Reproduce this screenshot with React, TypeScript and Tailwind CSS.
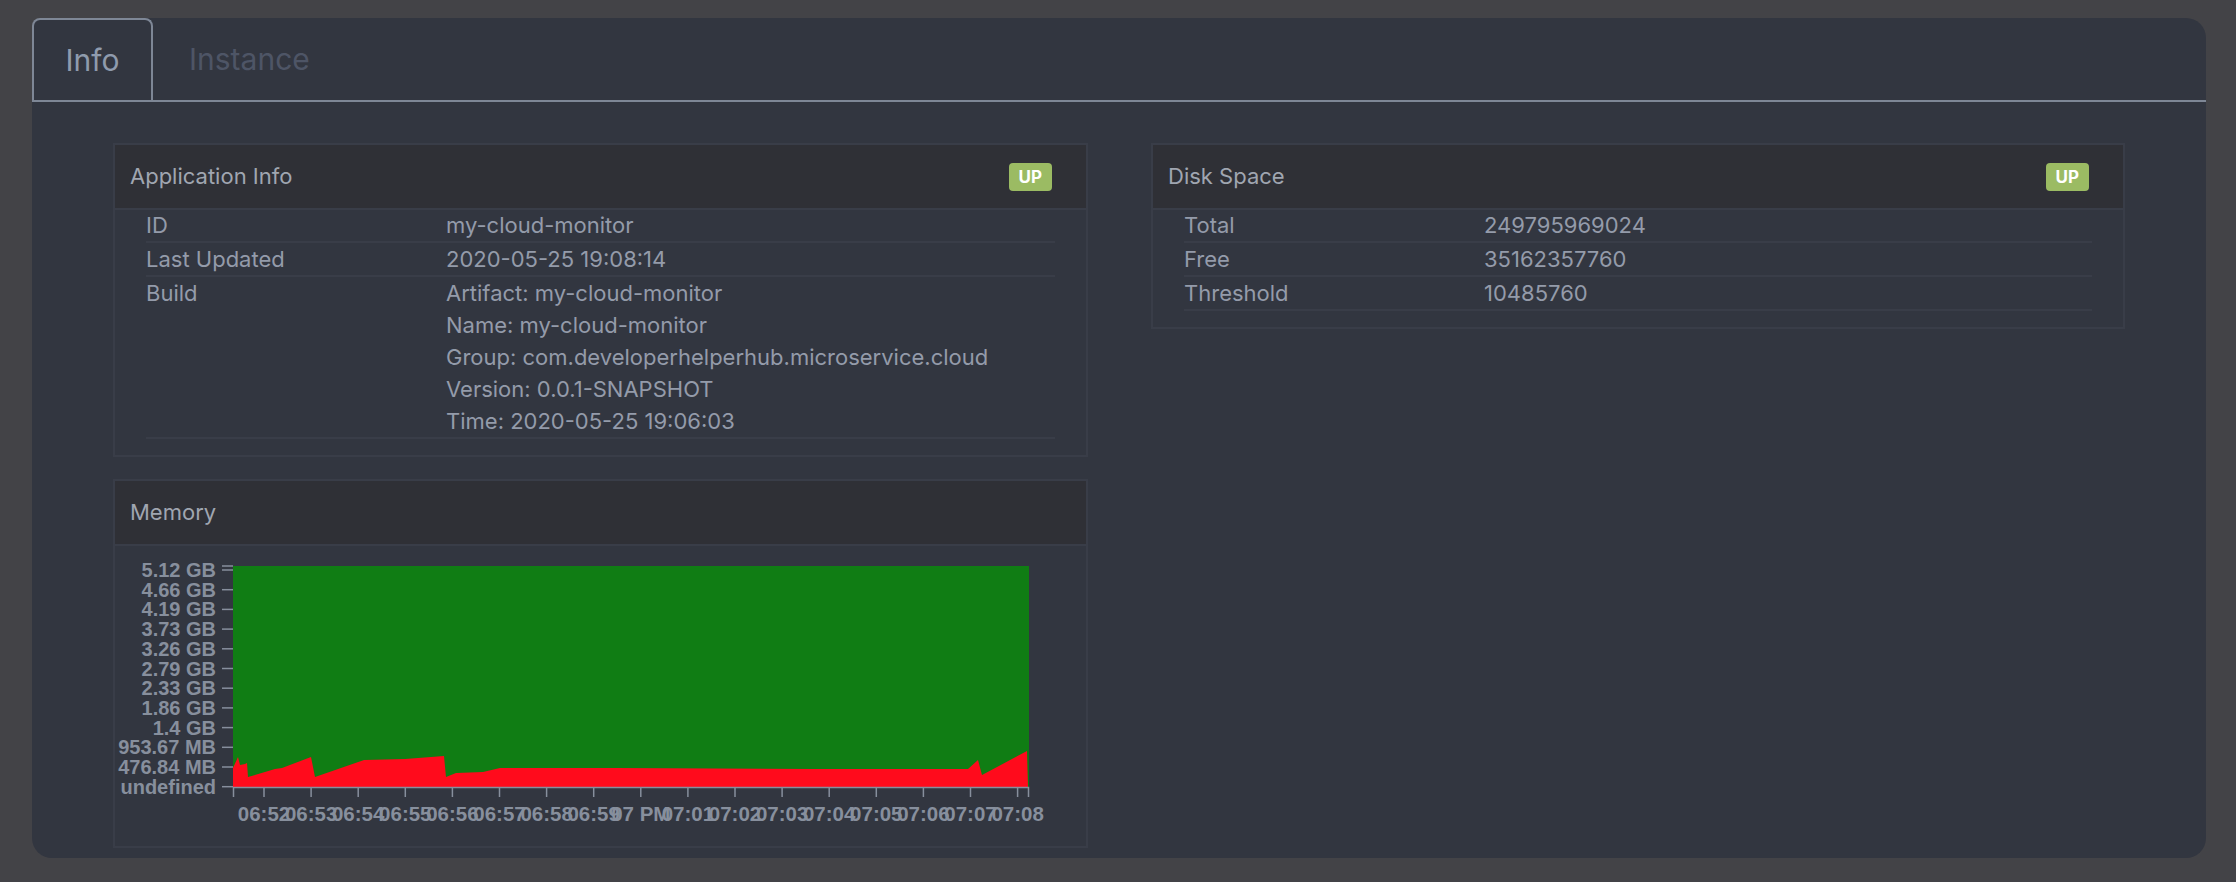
import React from "react";

type Row = { label: string; value: string[] };

const appRows: Row[] = [
  { label: "ID", value: ["my-cloud-monitor"] },
  { label: "Last Updated", value: ["2020-05-25 19:08:14"] },
  {
    label: "Build",
    value: [
      "Artifact: my-cloud-monitor",
      "Name: my-cloud-monitor",
      "Group: com.developerhelperhub.microservice.cloud",
      "Version: 0.0.1-SNAPSHOT",
      "Time: 2020-05-25 19:06:03",
    ],
  },
];

const diskRows: Row[] = [
  { label: "Total", value: ["249795969024"] },
  { label: "Free", value: ["35162357760"] },
  { label: "Threshold", value: ["10485760"] },
];

const yTicks = [
  "5.12 GB",
  "4.66 GB",
  "4.19 GB",
  "3.73 GB",
  "3.26 GB",
  "2.79 GB",
  "2.33 GB",
  "1.86 GB",
  "1.4 GB",
  "953.67 MB",
  "476.84 MB",
  "NaN undefined",
];

const xTicks = [
  "06:52",
  "06:53",
  "06:54",
  "06:55",
  "06:56",
  "06:57",
  "06:58",
  "06:59",
  "07 PM",
  "07:01",
  "07:02",
  "07:03",
  "07:04",
  "07:05",
  "07:06",
  "07:07",
  "07:08",
];

// used memory, in chart pixels
const usedPath =
  "M118,241 L118,222 L123,211 L125,219 L130,218 L132,217 L133,231 L160,223 L167,222 L196,211 L200,231 " +
  "L249,214 L290,213 L329,210 L331,231 L341,227 L368,226 L385,222 L500,222 L700,223 L853,223 " +
  "L863,214 L867,229 L912,205 L913,241 Z";

function Badge() {
  return (
    <span className="rounded-[4px] bg-[#9bbb63] px-[10px] text-[17px] leading-[28px] font-bold text-white">
      UP
    </span>
  );
}

function Panel({ title, badge, children }: { title: string; badge?: boolean; children: React.ReactNode }) {
  return (
    <div className="border-2 border-[#393d48]">
      <div className="flex h-[65px] items-center justify-between border-b-2 border-[#393d48] bg-[#2f3036] pl-[15px] pr-[34px]">
        <span className="text-[22px] text-[#a0a6b1]">{title}</span>
        {badge && <Badge />}
      </div>
      {children}
    </div>
  );
}

function InfoTable({ rows }: { rows: Row[] }) {
  return (
    <div className="mx-[31px] mb-[16px] mt-[-1px]">
      {rows.map((r) => (
        <div key={r.label} className="flex border-b-2 border-[#393d48] text-[22px] leading-[32px] text-[#949baa]">
          <div className="w-[300px] shrink-0">{r.label}</div>
          <div>
            {r.value.map((v) => (
              <div key={v}>{v}</div>
            ))}
          </div>
        </div>
      ))}
    </div>
  );
}

function MemoryChart() {
  const axis = "#878f9d";
  return (
    <svg width={971} height={299} className="block" style={{ fontFamily: "'Liberation Sans', Arial, sans-serif" }}>
      <rect x={118} y={20} width={796} height={221} fill="#107d14" />
      <path d={usedPath} fill="#ff0b1c" />
      {/* y axis */}
      <line x1={107} y1={20} x2={118} y2={20} stroke={axis} strokeWidth={1.5} />
      {yTicks.map((t, i) => {
        const y = 24 + i * 19.7;
        return (
          <g key={t}>
            <line x1={107} y1={y} x2={118} y2={y} stroke={axis} strokeWidth={1.5} />
            <text x={101} y={y + 7} textAnchor="end" fontSize={20} fontWeight={700} fill={axis}>
              {t}
            </text>
          </g>
        );
      })}
      {/* x axis */}
      <path d="M118.5,251 V241.5 H913.5 V251" fill="none" stroke={axis} strokeWidth={1.5} />
      {xTicks.map((t, i) => {
        const x = 149 + i * 47.1;
        return (
          <g key={t}>
            <line x1={x} y1={241} x2={x} y2={251} stroke={axis} strokeWidth={1.5} />
            <text x={x} y={275} textAnchor="middle" fontSize={20.5} fontWeight={700} fill={axis}>
              {t}
            </text>
          </g>
        );
      })}
    </svg>
  );
}

export default function App() {
  return (
    <div className="h-[882px] w-[2236px] bg-[#434347] pl-[32px] pr-[30px] pt-[18px] font-['Inter',sans-serif]">
      <div className="h-[840px] rounded-[20px] bg-[#323640]">
        <div className="flex h-[84px] border-b-2 border-[#7e8796]">
          <div className="flex w-[121px] items-center justify-center rounded-t-[8px] border-2 border-b-0 border-[#7e8796] bg-[#323640] text-[30px] text-[#8f9bad]">
            Info
          </div>
          <div className="flex items-center pl-[36px] text-[30px] text-[#4e5566]">Instance</div>
        </div>

        <div className="grid grid-cols-[975px_974px] gap-x-[63px] px-[81px] pt-[41px]">
          <div className="flex flex-col gap-[22px]">
            <Panel title="Application Info" badge>
              <InfoTable rows={appRows} />
            </Panel>
            <Panel title="Memory">
              <div className="h-[300px] overflow-hidden">
                <MemoryChart />
              </div>
            </Panel>
          </div>
          <div>
            <Panel title="Disk Space" badge>
              <InfoTable rows={diskRows} />
            </Panel>
          </div>
        </div>
      </div>
    </div>
  );
}
